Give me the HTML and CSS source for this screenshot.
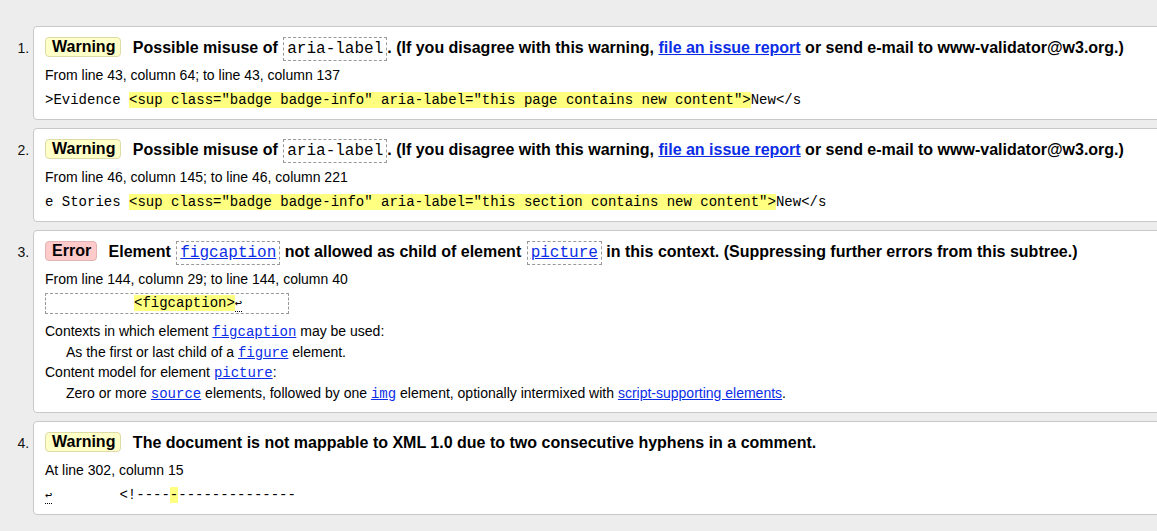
FILE: index.html
```html
<!DOCTYPE html>
<html lang="en">
<head>
<meta charset="utf-8">
<title>Validator messages</title>
<link rel="stylesheet" href="styles.css">
</head>
<body>
<ol class="msgs">
  <li class="msg">
    <p class="title"><span class="badge badge-warning">Warning</span> <span class="txt">Possible misuse of <code class="box">aria-label</code>. (If you disagree with this warning, <a href="#" class="link">file an issue report</a> or send e-mail to www-validator@w3.org.)</span></p>
    <p class="loc">From line 43, column 64; to line 43, column 137</p>
    <p class="extract"><code>&gt;Evidence <b class="hl">&lt;sup class="badge badge-info" aria-label="this page contains new content"&gt;</b>New&lt;/s</code></p>
  </li>
  <li class="msg">
    <p class="title"><span class="badge badge-warning">Warning</span> <span class="txt">Possible misuse of <code class="box">aria-label</code>. (If you disagree with this warning, <a href="#" class="link">file an issue report</a> or send e-mail to www-validator@w3.org.)</span></p>
    <p class="loc">From line 46, column 145; to line 46, column 221</p>
    <p class="extract"><code>e Stories <b class="hl">&lt;sup class="badge badge-info" aria-label="this section contains new content"&gt;</b>New&lt;/s</code></p>
  </li>
  <li class="msg">
    <p class="title"><span class="badge badge-error">Error</span> <span class="txt">Element <a href="#" class="box link">figcaption</a> not allowed as child of element <a href="#" class="box link">picture</a> in this context. (Suppressing further errors from this subtree.)</span></p>
    <p class="loc">From line 144, column 29; to line 144, column 40</p>
    <p class="extract extract-box"><code>          <b class="hl">&lt;figcaption&gt;</b><span class="lf">↩</span>     </code></p>
    <dl class="details">
      <dt>Contexts in which element <a href="#" class="clink">figcaption</a> may be used:</dt>
      <dd>As the first or last child of a <a href="#" class="clink">figure</a> element.</dd>
      <dt>Content model for element <a href="#" class="clink">picture</a>:</dt>
      <dd>Zero or more <a href="#" class="clink">source</a> elements, followed by one <a href="#" class="clink">img</a> element, optionally intermixed with <a href="#" class="link plain">script-supporting elements</a>.</dd>
    </dl>
  </li>
  <li class="msg">
    <p class="title"><span class="badge badge-warning">Warning</span> <span class="txt">The document is not mappable to XML 1.0 due to two consecutive hyphens in a comment.</span></p>
    <p class="loc">At line 302, column 15</p>
    <p class="extract"><code><span class="lf">↩</span>        &lt;!----<b class="hl">-</b>--------------</code></p>
  </li>
</ol>
</body>
</html>
```
FILE: styles.css
```css
html, body {
  overflow-x: hidden;
}
body {
  margin: 0;
  background: #ededed;
  font-family: "Liberation Sans", Arial, sans-serif;
  font-size: 14px;
  color: #000;
}
.msgs {
  margin: 0;
  padding: 26px 0 0 33px;
}
.msg {
  background: #fff;
  border: 1px solid #c8c8c8;
  border-radius: 4px;
  margin: 0 -20px 8px 0;
  padding: 9px 12px 9px 11px;
}
.msg::marker {
  font-size: 14px;
  color: #111;
}
.msg p {
  margin: 0;
}
.title {
  font-size: 16px;
  line-height: 24px;
  font-weight: bold;
}
.badge {
  display: inline-block;
  line-height: 18px;
  padding: 0 5px 0 6px;
  border: 1px solid;
  border-radius: 4px;
  margin-right: 7px;
  vertical-align: 1px;
}
.badge-warning {
  background: #ffffc8;
  border-color: #dedba8;
}
.badge-error {
  background: #ffcaca;
  border-color: #e2b3b3;
}
.box {
  font-family: "Liberation Mono", "Courier New", monospace;
  font-size: 16px;
  line-height: 16px;
  font-weight: normal;
  border: 1px dashed #999;
  padding: 2px 3px;
  margin-left: 1px;
}
.link {
  color: #0b2de6;
  text-decoration: underline;
}
.loc {
  line-height: 20px;
  margin-top: 5px !important;
}
.extract {
  font-family: "Liberation Mono", "Courier New", monospace;
  font-size: 14px;
  line-height: 20px;
  margin-top: 5px !important;
}
.extract code {
  font-family: inherit;
  font-size: 14px;
  white-space: pre;
}
.hl {
  font-weight: normal;
  background: #ffff80;
}
.lf {
  border-bottom: 1px dotted #000;
  font-size: 12px;
  line-height: 12px;
}
.extract-box {
  display: inline-block;
  margin-top: 4px !important;
  line-height: 19px;
  border: 1px dashed #999;
  padding: 0 4px;
}
.details {
  margin: 7px 0 0;
  line-height: 20.5px;
}
.details dt,
.details dd {
  margin: 0;
}
.details dd {
  margin-left: 21px;
}
.clink {
  font-family: "Liberation Mono", "Courier New", monospace;
  font-size: 14px;
  line-height: 14px;
  color: #0b2de6;
}
.plain {
  font-family: inherit;
}
```
